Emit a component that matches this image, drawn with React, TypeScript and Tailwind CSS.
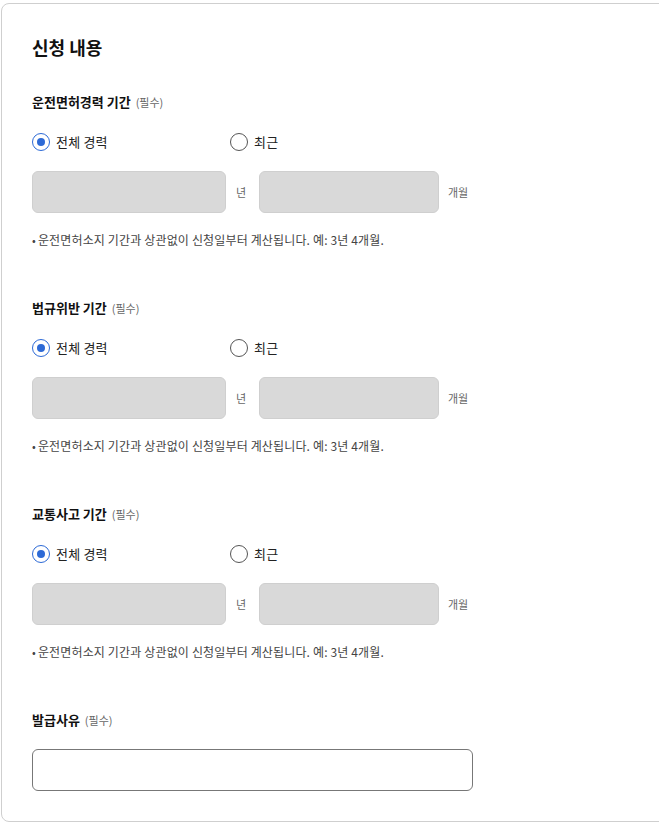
import React from "react";

const font = { fontFamily: '"Noto Sans CJK KR", "Noto Sans", sans-serif' };

function Radio({ checked, label }: { checked?: boolean; label: string }) {
  return (
    <div className="flex items-center gap-[6px]">
      {checked ? (
        <span className="w-[18px] h-[18px] rounded-full border-[1.5px] border-[#2d6ad6] flex items-center justify-center">
          <span className="w-[8px] h-[8px] rounded-full bg-[#2d6ad6]" />
        </span>
      ) : (
        <span className="w-[18px] h-[18px] rounded-full border-[1.5px] border-[#555]" />
      )}
      <span className="text-[13px] leading-[20px] tracking-[0.2px] text-[#222]">{label}</span>
    </div>
  );
}

function Section({ title }: { title: string }) {
  return (
    <div className="flex flex-col">
      <div className="h-[20px] flex items-center">
        <span className="text-[13px] font-bold text-[#111]">{title}</span>
        <span className="text-[11px] text-[#666] ml-[5px]">(필수)</span>
      </div>
      <div className="mt-[20px] h-[20px] flex items-center">
        <div className="w-[198px]">
          <Radio checked label="전체 경력" />
        </div>
        <Radio label="최근" />
      </div>
      <div className="mt-[19px] flex items-center">
        <div className="w-[194px] h-[42px] rounded-[6px] bg-[#d9d9d9] border border-[#cfcfcf]" />
        <span className="w-[33px] pl-[10px] text-[11px] text-[#666]">년</span>
        <div className="w-[180px] h-[42px] rounded-[6px] bg-[#d9d9d9] border border-[#cfcfcf]" />
        <span className="pl-[9px] text-[11px] text-[#666]">개월</span>
      </div>
      <div className="mt-[18px] h-[18px] flex items-center text-[12px] tracking-[0.15px] text-[#444]">
        <span className="mr-[2px] text-[11px]">•</span>
        <span>운전면허소지 기간과 상관없이 신청일부터 계산됩니다. 예: 3년 4개월.</span>
      </div>
    </div>
  );
}

export default function App() {
  return (
    <div className="w-full overflow-hidden bg-white" style={font}>
      <div className="ml-[1px] mt-[3px] w-[700px] border border-[#cfcfcf] rounded-[8px] pl-[30px] pt-[30px] pb-[30px]">
        <div className="h-[26px] flex items-center text-[18px] font-bold text-[#111]">신청 내용</div>
        <div className="mt-[32px] flex flex-col gap-[49px]">
          <Section title="운전면허경력 기간" />
          <Section title="법규위반 기간" />
          <Section title="교통사고 기간" />
          <div className="flex flex-col">
            <div className="h-[20px] flex items-center">
              <span className="text-[13px] font-bold text-[#111]">발급사유</span>
              <span className="text-[11px] text-[#666] ml-[5px]">(필수)</span>
            </div>
            <div className="mt-[19px] w-[441px] h-[42px] rounded-[6px] border border-[#777] bg-white" />
          </div>
        </div>
      </div>
    </div>
  );
}
